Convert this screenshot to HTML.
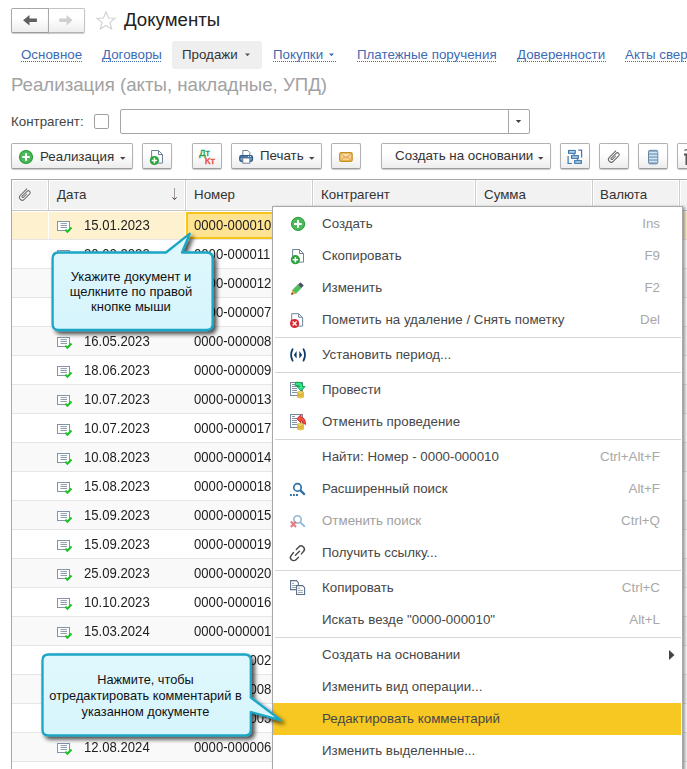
<!DOCTYPE html>
<html><head><meta charset="utf-8">
<style>
*{box-sizing:border-box;margin:0;padding:0}
html,body{width:687px;height:769px;overflow:hidden;background:#fff}
body{position:relative;font-family:"Liberation Sans",sans-serif;font-size:13.33px;color:#333}
.a{position:absolute;white-space:nowrap}
.btn{position:absolute;height:26px;border:1px solid #b2b2b2;border-bottom-color:#9c9c9c;border-radius:2px;background:linear-gradient(#fff 40%,#ededed);box-shadow:0 1px 1px rgba(0,0,0,.2)}
.lnk{position:absolute;color:#3d6bb3;white-space:nowrap;line-height:15px;height:16px;background:linear-gradient(90deg,#3d6bb3 50%,transparent 50%) 0 14px/2px 1px repeat-x}
.hd{position:absolute;top:180px;height:30px;background:#f2f2f2}
.vl{position:absolute;width:1px;background:#fff}
.row{position:absolute;left:12px;width:675px;height:29px}
.cell{position:absolute;white-space:nowrap;line-height:29px}
.mi{position:absolute;left:273px;width:409px;height:32px}
.mi .t{position:absolute;left:49px;top:0;line-height:32px;color:#474747}
.mi .k{position:absolute;right:22px;top:0;line-height:32px;color:#a8a8a8}
.dg{line-height:16px;color:#1e1e1e;transform:scale(0.985,1.09);transform-origin:0 3px}
.sep{position:absolute;left:279px;width:401px;height:1px;background:#d6d6d6}
</style></head><body>

<!-- nav buttons -->
<div class="btn" style="left:11px;top:8px;width:38px;height:25px;border-color:#a8a8a8;border-bottom-color:#9a9a9a;border-radius:2px 0 0 2px"></div>
<div class="btn" style="left:48px;top:8px;width:37px;height:25px;border-color:#c4c4c4;border-bottom-color:#b4b4b4;border-left-color:#a8a8a8;border-radius:0 2px 2px 0"></div>
<svg class="a" style="left:0;top:0" width="90" height="40" viewBox="0 0 90 40"><path d="M23.1 20.3 L29.5 15.1 V18.6 H36.9 V22 H29.5 V25.5Z" fill="#606060"/><path d="M72.6 20.3 L66.6 15.1 V18.6 H59.2 V22 H66.6 V25.5Z" fill="#cfcfcf"/></svg>
<svg class="a" style="left:96px;top:11px" width="20" height="19" viewBox="0 0 20 19"><path d="M10 1 L12.6 7 L19 7.3 L14 11.4 L15.7 18 L10 14.4 L4.3 18 L6 11.4 L1 7.3 L7.4 7Z" fill="none" stroke="#d4d4d4" stroke-width="1.2"/></svg>
<div class="a" style="left:124px;top:9px;font-size:18.67px;color:#222">Документы</div>

<!-- tabs -->
<div class="lnk" style="left:21px;top:47px;width:61px">Основное</div>
<div class="lnk" style="left:102px;top:47px;width:60px">Договоры</div>
<div class="a" style="left:172px;top:41px;width:90px;height:28px;background:#efefef;border-radius:3px"></div>
<div class="a" style="left:182px;top:47px;line-height:15px;color:#333">Продажи</div>
<svg class="a" style="left:245px;top:53px" width="6" height="4" viewBox="0 0 6 4"><path d="M0 0.5h5L2.5 3.2z" fill="#555"/></svg>
<div class="lnk" style="left:273px;top:47px;width:63px">Покупки</div>
<svg class="a" style="left:329px;top:53px" width="6" height="4" viewBox="0 0 6 4"><path d="M0 0.5h5L2.5 3.2z" fill="#3d6bb3"/></svg>
<div class="lnk" style="left:357px;top:47px;width:140px">Платежные поручения</div>
<div class="lnk" style="left:517px;top:47px;width:89px">Доверенности</div>
<div class="lnk" style="left:625px;top:47px;width:90px">Акты сверки</div>
<div class="a" style="left:11px;top:74px;font-size:18.67px;color:#a2a2a2">Реализация (акты, накладные, УПД)</div>

<!-- filter -->
<div class="a" style="left:11px;top:114px;color:#444">Контрагент:</div>
<div class="a" style="left:94px;top:114px;width:15px;height:15px;border:1px solid #a0a0a0;border-radius:2px;background:#fff"></div>
<div class="a" style="left:120px;top:109px;width:410px;height:25px;border:1px solid #a6a6a6;border-radius:2px;background:#fff"></div>
<div class="a" style="left:508px;top:110px;width:1px;height:23px;background:#a8a8a8"></div>
<svg class="a" style="left:515px;top:119px" width="7" height="5" viewBox="0 0 7 5"><path d="M0.8 1 H6.2 L3.5 3.9Z" fill="#404040"/></svg>


<!-- toolbar -->
<div class="btn" style="left:11px;top:143px;width:122px"></div>
<svg class="a" style="left:18px;top:149px" width="16" height="16" viewBox="0 0 16 16"><circle cx="8" cy="8" r="6.5" fill="#4cb95a" stroke="#239b34" stroke-width="1.1"/><path d="M8 4.3v7.4M4.3 8h7.4" stroke="#fff" stroke-width="2"/></svg>
<div class="a" style="left:40px;top:148.5px;line-height:16px;color:#333">Реализация</div>
<svg class="a" style="left:120px;top:156px" width="6" height="4" viewBox="0 0 6 4"><path d="M0 1h5.5L2.75 3.8z" fill="#444"/></svg>
<div class="btn" style="left:142px;top:143px;width:30px"></div>
<svg class="a" style="left:142px;top:143px" width="30" height="26" viewBox="0 0 30 26"><g transform="translate(3,0)"><path d="M6.6 7.5h6.9l4 4v8.6h-10.9z" fill="#fff" stroke="#6f8398" stroke-width="1"/><path d="M13.5 7.5v4h4" fill="none" stroke="#6f8398" stroke-width="1"/><circle cx="9.4" cy="17.5" r="4.6" fill="#2aa23a"/><path d="M9.4 14.8v5.4M6.7 17.5h5.4" stroke="#fff" stroke-width="1.6"/></g></svg>
<div class="btn" style="left:192px;top:143px;width:30px"></div>
<svg class="a" style="left:190px;top:141px" width="35" height="30" viewBox="0 0 35 30"><text x="9.2" y="14.9" font-family="Liberation Sans" font-size="9.4" fill="#1e9a48" stroke="#1e9a48" stroke-width="0.35" textLength="10.6" lengthAdjust="spacingAndGlyphs">Дт</text><text x="14.8" y="22.9" font-family="Liberation Sans" font-size="8.2" fill="#ea4a42" stroke="#ea4a42" stroke-width="0.35" textLength="10.2" lengthAdjust="spacingAndGlyphs">Кт</text></svg>

<div class="btn" style="left:231px;top:143px;width:91px"></div>
<svg class="a" style="left:232px;top:143px" width="30" height="26" viewBox="0 0 30 26"><path d="M10.8 7.5h5l2 2v3.5h-7z" fill="#fff" stroke="#6d7f92" stroke-width="1"/><rect x="7.8" y="12.8" width="12.6" height="5.4" rx="1.4" fill="#7ba6d0" stroke="#2c5a8a" stroke-width="1.4"/><path d="M8.5 14.3h11" stroke="#2c5a8a" stroke-width="1"/><rect x="10.8" y="15" width="7" height="5.2" fill="#fff" stroke="#6d7f92" stroke-width="1"/><rect x="16.2" y="13" width="0.9" height="0.9" fill="#fff"/><rect x="18" y="13" width="0.9" height="0.9" fill="#fff"/></svg>
<div class="a" style="left:260px;top:148px;line-height:16px;color:#333">Печать</div>
<svg class="a" style="left:309px;top:156px" width="6" height="4" viewBox="0 0 6 4"><path d="M0 1h5.5L2.75 3.8z" fill="#444"/></svg>
<div class="btn" style="left:331px;top:143px;width:30px"></div>
<svg class="a" style="left:331px;top:143px" width="30" height="26" viewBox="0 0 30 26"><defs><linearGradient id="env" x1="0" y1="0" x2="0" y2="1"><stop offset="0" stop-color="#fdf0b8"/><stop offset="0.5" stop-color="#f8c890"/><stop offset="1" stop-color="#f6dc78"/></linearGradient></defs><rect x="8.8" y="9.7" width="12.3" height="8.5" rx="1.3" fill="url(#env)" stroke="#c8901e" stroke-width="1.4"/><path d="M10 10.8 L15 15 L20 10.8M10 17.5 L13.6 13.9M20 17.5 L16.4 13.9" fill="none" stroke="#d89a48" stroke-width="0.9"/></svg>
<div class="btn" style="left:381px;top:143px;width:170px"></div>
<div class="a" style="left:395px;top:148px;line-height:16px;color:#333">Создать на основании</div>
<svg class="a" style="left:538px;top:156px" width="6" height="4" viewBox="0 0 6 4"><path d="M0 1h5.5L2.75 3.8z" fill="#444"/></svg>
<div class="btn" style="left:560px;top:143px;width:30px"></div>
<svg class="a" style="left:560px;top:143px" width="30" height="26" viewBox="0 0 30 26"><path d="M8.1 13.1V20.5H11.8M18.3 7.2H21.6V14.4" fill="none" stroke="#3a78b0" stroke-width="1.2"/><path d="M14 10.7V12.2M17.5 15.7V17.2" stroke="#3a78b0" stroke-width="1.2"/><rect x="8.6" y="7.5" width="6.6" height="2.8" fill="#c8dcee" stroke="#3a78b0" stroke-width="1.2"/><rect x="11.6" y="12.7" width="6.7" height="2.6" fill="#c8dcee" stroke="#3a78b0" stroke-width="1.2"/><rect x="14.7" y="17.7" width="6.6" height="2.6" fill="#c8dcee" stroke="#3a78b0" stroke-width="1.2"/></svg>
<div class="btn" style="left:599px;top:143px;width:30px"></div>
<svg class="a" style="left:599px;top:143px" width="30" height="26" viewBox="0 0 30 26"><path transform="translate(14.6,14.1) rotate(-45)" d="M6.3 -2.8 L-3.3 -2.8 A2.8 2.8 0 0 0 -3.3 2.8 L4.4 2.8 A1.9 1.9 0 0 0 4.4 -1.0 L-2.4 -1.0 A0.85 0.85 0 0 0 -2.4 0.7 L2.6 0.7" fill="none" stroke="#666" stroke-width="1"/></svg>
<div class="btn" style="left:638px;top:143px;width:30px"></div>
<svg class="a" style="left:638px;top:143px" width="30" height="26" viewBox="0 0 30 26"><rect x="10.5" y="7.3" width="9.3" height="13.6" rx="1.6" fill="#90b2cf" stroke="#6888a6" stroke-width="1"/><path d="M11 9.6h8.3M11 12.6h8.3M11 15.6h8.3M11 18.6h8.3" stroke="#dbe8f3" stroke-width="1"/></svg>
<div class="btn" style="left:677px;top:143px;width:30px"></div>
<svg class="a" style="left:680px;top:143px" width="10" height="26" viewBox="0 0 10 26"><path d="M4.5 7.5 L7 6.5" stroke="#777" stroke-width="1.6"/><path d="M4 11.5 H6.5 V21 H5.5" fill="none" stroke="#555" stroke-width="2"/></svg>


<!-- table -->
<div class="a" style="left:11px;top:179px;width:676px;height:590px;border-left:1px solid #a8a8a8;border-top:1px solid #a8a8a8"></div>
<div class="hd" style="left:12px;width:675px;border-top:1px solid #fff;border-bottom:1px solid #fff;border-left:1px solid #fff"></div>
<div class="a" style="left:12px;top:210px;width:675px;height:1px;background:#c4c4c4"></div>
<div class="a" style="left:47px;top:180px;width:1px;height:30px;background:#fff"></div><div class="a" style="left:48px;top:180px;width:1px;height:30px;background:#cdcdcd"></div><div class="a" style="left:49px;top:180px;width:1px;height:30px;background:#fff"></div>
<div class="a" style="left:184px;top:180px;width:1px;height:30px;background:#fff"></div><div class="a" style="left:185px;top:180px;width:1px;height:30px;background:#cdcdcd"></div><div class="a" style="left:186px;top:180px;width:1px;height:30px;background:#fff"></div>
<div class="a" style="left:311px;top:180px;width:1px;height:30px;background:#fff"></div><div class="a" style="left:312px;top:180px;width:1px;height:30px;background:#cdcdcd"></div><div class="a" style="left:313px;top:180px;width:1px;height:30px;background:#fff"></div>
<div class="a" style="left:474px;top:180px;width:1px;height:30px;background:#fff"></div><div class="a" style="left:475px;top:180px;width:1px;height:30px;background:#cdcdcd"></div><div class="a" style="left:476px;top:180px;width:1px;height:30px;background:#fff"></div>
<div class="a" style="left:591px;top:180px;width:1px;height:30px;background:#fff"></div><div class="a" style="left:592px;top:180px;width:1px;height:30px;background:#cdcdcd"></div><div class="a" style="left:593px;top:180px;width:1px;height:30px;background:#fff"></div>
<div class="a" style="left:678px;top:180px;width:1px;height:30px;background:#fff"></div><div class="a" style="left:679px;top:180px;width:1px;height:30px;background:#cdcdcd"></div><div class="a" style="left:680px;top:180px;width:1px;height:30px;background:#fff"></div>
<svg class="a" style="left:12px;top:181px" width="30" height="26" viewBox="0 0 30 26"><path transform="translate(12.6,14.1) rotate(-45)" d="M6.3 -2.8 L-3.3 -2.8 A2.8 2.8 0 0 0 -3.3 2.8 L4.4 2.8 A1.9 1.9 0 0 0 4.4 -1.0 L-2.4 -1.0 A0.85 0.85 0 0 0 -2.4 0.7 L2.6 0.7" fill="none" stroke="#707070" stroke-width="1"/></svg>
<div class="a" style="left:57px;top:187px;line-height:16px;color:#333">Дата</div>
<svg class="a" style="left:170px;top:187px" width="9" height="14" viewBox="0 0 9 14"><path d="M4.5 1V12.3" stroke="#9a9090" stroke-width="0.9"/><path d="M2.4 10.4 L4.5 12.6 L6.6 10.4" fill="none" stroke="#3a3a3a" stroke-width="1"/></svg>
<div class="a" style="left:194px;top:187px;line-height:16px;color:#333">Номер</div>
<div class="a" style="left:321px;top:187px;line-height:16px;color:#333">Контрагент</div>
<div class="a" style="left:484px;top:187px;line-height:16px;color:#333">Сумма</div>
<div class="a" style="left:600px;top:187px;line-height:16px;color:#333">Валюта</div>
<div class="a" style="left:12px;top:212px;width:675px;height:27px;background:#fdf1cf"></div><div class="a" style="left:12px;top:239px;width:675px;height:1px;background:#e6e6e6"></div><div class="a" style="left:48px;top:211px;width:1px;height:28px;background:#fff"></div><div class="a" style="left:185px;top:211px;width:1px;height:28px;background:#fff"></div><div class="a" style="left:312px;top:211px;width:1px;height:28px;background:#fff"></div><div class="a" style="left:475px;top:211px;width:1px;height:28px;background:#fff"></div><div class="a" style="left:592px;top:211px;width:1px;height:28px;background:#fff"></div><div class="a" style="left:679px;top:212px;width:1px;height:27px;background:#fff"></div><div class="a" style="left:186px;top:212px;width:126px;height:27px;border:2px solid #f6c51c;background:#fde392"></div><svg class="a" style="left:57px;top:221px" width="16" height="13" viewBox="0 0 16 13"><rect x="0.5" y="0.5" width="12" height="9" fill="#fff" stroke="#8494a6"/><path d="M3.5 2.6h6.5M3.5 4.5h6.5M3.5 6.5h6.5" stroke="#8e9cac" stroke-width="1"/><path d="M8.3 8.6l2.1 2.2 4.1-4.3" fill="none" stroke="#1fc32a" stroke-width="2.1"/></svg><div class="a dg" style="left:84px;top:217px">15.01.2023</div><div class="a dg" style="left:194px;top:217px">0000-000010</div>
<div class="a" style="left:12px;top:240px;width:675px;height:28px;background:#fff"></div><div class="a" style="left:12px;top:268px;width:675px;height:1px;background:#e6e6e6"></div><svg class="a" style="left:57px;top:250px" width="16" height="13" viewBox="0 0 16 13"><rect x="0.5" y="0.5" width="12" height="9" fill="#fff" stroke="#8494a6"/><path d="M3.5 2.6h6.5M3.5 4.5h6.5M3.5 6.5h6.5" stroke="#8e9cac" stroke-width="1"/><path d="M8.3 8.6l2.1 2.2 4.1-4.3" fill="none" stroke="#1fc32a" stroke-width="2.1"/></svg><div class="a dg" style="left:84px;top:246px">20.02.2023</div><div class="a dg" style="left:194px;top:246px">0000-000011</div>
<div class="a" style="left:12px;top:269px;width:675px;height:28px;background:#f9f9f9"></div><div class="a" style="left:12px;top:297px;width:675px;height:1px;background:#e6e6e6"></div><svg class="a" style="left:57px;top:279px" width="16" height="13" viewBox="0 0 16 13"><rect x="0.5" y="0.5" width="12" height="9" fill="#fff" stroke="#8494a6"/><path d="M3.5 2.6h6.5M3.5 4.5h6.5M3.5 6.5h6.5" stroke="#8e9cac" stroke-width="1"/><path d="M8.3 8.6l2.1 2.2 4.1-4.3" fill="none" stroke="#1fc32a" stroke-width="2.1"/></svg><div class="a dg" style="left:84px;top:275px">20.03.2023</div><div class="a dg" style="left:194px;top:275px">0000-000012</div>
<div class="a" style="left:12px;top:298px;width:675px;height:28px;background:#fff"></div><div class="a" style="left:12px;top:326px;width:675px;height:1px;background:#e6e6e6"></div><svg class="a" style="left:57px;top:308px" width="16" height="13" viewBox="0 0 16 13"><rect x="0.5" y="0.5" width="12" height="9" fill="#fff" stroke="#8494a6"/><path d="M3.5 2.6h6.5M3.5 4.5h6.5M3.5 6.5h6.5" stroke="#8e9cac" stroke-width="1"/><path d="M8.3 8.6l2.1 2.2 4.1-4.3" fill="none" stroke="#1fc32a" stroke-width="2.1"/></svg><div class="a dg" style="left:84px;top:304px">20.04.2023</div><div class="a dg" style="left:194px;top:304px">0000-000007</div>
<div class="a" style="left:12px;top:327px;width:675px;height:28px;background:#f9f9f9"></div><div class="a" style="left:12px;top:355px;width:675px;height:1px;background:#e6e6e6"></div><svg class="a" style="left:57px;top:337px" width="16" height="13" viewBox="0 0 16 13"><rect x="0.5" y="0.5" width="12" height="9" fill="#fff" stroke="#8494a6"/><path d="M3.5 2.6h6.5M3.5 4.5h6.5M3.5 6.5h6.5" stroke="#8e9cac" stroke-width="1"/><path d="M8.3 8.6l2.1 2.2 4.1-4.3" fill="none" stroke="#1fc32a" stroke-width="2.1"/></svg><div class="a dg" style="left:84px;top:333px">16.05.2023</div><div class="a dg" style="left:194px;top:333px">0000-000008</div>
<div class="a" style="left:12px;top:356px;width:675px;height:28px;background:#fff"></div><div class="a" style="left:12px;top:384px;width:675px;height:1px;background:#e6e6e6"></div><svg class="a" style="left:57px;top:366px" width="16" height="13" viewBox="0 0 16 13"><rect x="0.5" y="0.5" width="12" height="9" fill="#fff" stroke="#8494a6"/><path d="M3.5 2.6h6.5M3.5 4.5h6.5M3.5 6.5h6.5" stroke="#8e9cac" stroke-width="1"/><path d="M8.3 8.6l2.1 2.2 4.1-4.3" fill="none" stroke="#1fc32a" stroke-width="2.1"/></svg><div class="a dg" style="left:84px;top:362px">18.06.2023</div><div class="a dg" style="left:194px;top:362px">0000-000009</div>
<div class="a" style="left:12px;top:385px;width:675px;height:28px;background:#f9f9f9"></div><div class="a" style="left:12px;top:413px;width:675px;height:1px;background:#e6e6e6"></div><svg class="a" style="left:57px;top:395px" width="16" height="13" viewBox="0 0 16 13"><rect x="0.5" y="0.5" width="12" height="9" fill="#fff" stroke="#8494a6"/><path d="M3.5 2.6h6.5M3.5 4.5h6.5M3.5 6.5h6.5" stroke="#8e9cac" stroke-width="1"/><path d="M8.3 8.6l2.1 2.2 4.1-4.3" fill="none" stroke="#1fc32a" stroke-width="2.1"/></svg><div class="a dg" style="left:84px;top:391px">10.07.2023</div><div class="a dg" style="left:194px;top:391px">0000-000013</div>
<div class="a" style="left:12px;top:414px;width:675px;height:28px;background:#fff"></div><div class="a" style="left:12px;top:442px;width:675px;height:1px;background:#e6e6e6"></div><svg class="a" style="left:57px;top:424px" width="16" height="13" viewBox="0 0 16 13"><rect x="0.5" y="0.5" width="12" height="9" fill="#fff" stroke="#8494a6"/><path d="M3.5 2.6h6.5M3.5 4.5h6.5M3.5 6.5h6.5" stroke="#8e9cac" stroke-width="1"/><path d="M8.3 8.6l2.1 2.2 4.1-4.3" fill="none" stroke="#1fc32a" stroke-width="2.1"/></svg><div class="a dg" style="left:84px;top:420px">10.07.2023</div><div class="a dg" style="left:194px;top:420px">0000-000017</div>
<div class="a" style="left:12px;top:443px;width:675px;height:28px;background:#f9f9f9"></div><div class="a" style="left:12px;top:471px;width:675px;height:1px;background:#e6e6e6"></div><svg class="a" style="left:57px;top:453px" width="16" height="13" viewBox="0 0 16 13"><rect x="0.5" y="0.5" width="12" height="9" fill="#fff" stroke="#8494a6"/><path d="M3.5 2.6h6.5M3.5 4.5h6.5M3.5 6.5h6.5" stroke="#8e9cac" stroke-width="1"/><path d="M8.3 8.6l2.1 2.2 4.1-4.3" fill="none" stroke="#1fc32a" stroke-width="2.1"/></svg><div class="a dg" style="left:84px;top:449px">10.08.2023</div><div class="a dg" style="left:194px;top:449px">0000-000014</div>
<div class="a" style="left:12px;top:472px;width:675px;height:28px;background:#fff"></div><div class="a" style="left:12px;top:500px;width:675px;height:1px;background:#e6e6e6"></div><svg class="a" style="left:57px;top:482px" width="16" height="13" viewBox="0 0 16 13"><rect x="0.5" y="0.5" width="12" height="9" fill="#fff" stroke="#8494a6"/><path d="M3.5 2.6h6.5M3.5 4.5h6.5M3.5 6.5h6.5" stroke="#8e9cac" stroke-width="1"/><path d="M8.3 8.6l2.1 2.2 4.1-4.3" fill="none" stroke="#1fc32a" stroke-width="2.1"/></svg><div class="a dg" style="left:84px;top:478px">15.08.2023</div><div class="a dg" style="left:194px;top:478px">0000-000018</div>
<div class="a" style="left:12px;top:501px;width:675px;height:28px;background:#f9f9f9"></div><div class="a" style="left:12px;top:529px;width:675px;height:1px;background:#e6e6e6"></div><svg class="a" style="left:57px;top:511px" width="16" height="13" viewBox="0 0 16 13"><rect x="0.5" y="0.5" width="12" height="9" fill="#fff" stroke="#8494a6"/><path d="M3.5 2.6h6.5M3.5 4.5h6.5M3.5 6.5h6.5" stroke="#8e9cac" stroke-width="1"/><path d="M8.3 8.6l2.1 2.2 4.1-4.3" fill="none" stroke="#1fc32a" stroke-width="2.1"/></svg><div class="a dg" style="left:84px;top:507px">15.09.2023</div><div class="a dg" style="left:194px;top:507px">0000-000015</div>
<div class="a" style="left:12px;top:530px;width:675px;height:28px;background:#fff"></div><div class="a" style="left:12px;top:558px;width:675px;height:1px;background:#e6e6e6"></div><svg class="a" style="left:57px;top:540px" width="16" height="13" viewBox="0 0 16 13"><rect x="0.5" y="0.5" width="12" height="9" fill="#fff" stroke="#8494a6"/><path d="M3.5 2.6h6.5M3.5 4.5h6.5M3.5 6.5h6.5" stroke="#8e9cac" stroke-width="1"/><path d="M8.3 8.6l2.1 2.2 4.1-4.3" fill="none" stroke="#1fc32a" stroke-width="2.1"/></svg><div class="a dg" style="left:84px;top:536px">15.09.2023</div><div class="a dg" style="left:194px;top:536px">0000-000019</div>
<div class="a" style="left:12px;top:559px;width:675px;height:28px;background:#f9f9f9"></div><div class="a" style="left:12px;top:587px;width:675px;height:1px;background:#e6e6e6"></div><svg class="a" style="left:57px;top:569px" width="16" height="13" viewBox="0 0 16 13"><rect x="0.5" y="0.5" width="12" height="9" fill="#fff" stroke="#8494a6"/><path d="M3.5 2.6h6.5M3.5 4.5h6.5M3.5 6.5h6.5" stroke="#8e9cac" stroke-width="1"/><path d="M8.3 8.6l2.1 2.2 4.1-4.3" fill="none" stroke="#1fc32a" stroke-width="2.1"/></svg><div class="a dg" style="left:84px;top:565px">25.09.2023</div><div class="a dg" style="left:194px;top:565px">0000-000020</div>
<div class="a" style="left:12px;top:588px;width:675px;height:28px;background:#fff"></div><div class="a" style="left:12px;top:616px;width:675px;height:1px;background:#e6e6e6"></div><svg class="a" style="left:57px;top:598px" width="16" height="13" viewBox="0 0 16 13"><rect x="0.5" y="0.5" width="12" height="9" fill="#fff" stroke="#8494a6"/><path d="M3.5 2.6h6.5M3.5 4.5h6.5M3.5 6.5h6.5" stroke="#8e9cac" stroke-width="1"/><path d="M8.3 8.6l2.1 2.2 4.1-4.3" fill="none" stroke="#1fc32a" stroke-width="2.1"/></svg><div class="a dg" style="left:84px;top:594px">10.10.2023</div><div class="a dg" style="left:194px;top:594px">0000-000016</div>
<div class="a" style="left:12px;top:617px;width:675px;height:28px;background:#f9f9f9"></div><div class="a" style="left:12px;top:645px;width:675px;height:1px;background:#e6e6e6"></div><svg class="a" style="left:57px;top:627px" width="16" height="13" viewBox="0 0 16 13"><rect x="0.5" y="0.5" width="12" height="9" fill="#fff" stroke="#8494a6"/><path d="M3.5 2.6h6.5M3.5 4.5h6.5M3.5 6.5h6.5" stroke="#8e9cac" stroke-width="1"/><path d="M8.3 8.6l2.1 2.2 4.1-4.3" fill="none" stroke="#1fc32a" stroke-width="2.1"/></svg><div class="a dg" style="left:84px;top:623px">15.03.2024</div><div class="a dg" style="left:194px;top:623px">0000-000001</div>
<div class="a" style="left:12px;top:646px;width:675px;height:28px;background:#fff"></div><div class="a" style="left:12px;top:674px;width:675px;height:1px;background:#e6e6e6"></div><svg class="a" style="left:57px;top:656px" width="16" height="13" viewBox="0 0 16 13"><rect x="0.5" y="0.5" width="12" height="9" fill="#fff" stroke="#8494a6"/><path d="M3.5 2.6h6.5M3.5 4.5h6.5M3.5 6.5h6.5" stroke="#8e9cac" stroke-width="1"/><path d="M8.3 8.6l2.1 2.2 4.1-4.3" fill="none" stroke="#1fc32a" stroke-width="2.1"/></svg><div class="a dg" style="left:84px;top:652px">15.04.2024</div><div class="a dg" style="left:194px;top:652px">0000-000002</div>
<div class="a" style="left:12px;top:675px;width:675px;height:28px;background:#f9f9f9"></div><div class="a" style="left:12px;top:703px;width:675px;height:1px;background:#e6e6e6"></div><svg class="a" style="left:57px;top:685px" width="16" height="13" viewBox="0 0 16 13"><rect x="0.5" y="0.5" width="12" height="9" fill="#fff" stroke="#8494a6"/><path d="M3.5 2.6h6.5M3.5 4.5h6.5M3.5 6.5h6.5" stroke="#8e9cac" stroke-width="1"/><path d="M8.3 8.6l2.1 2.2 4.1-4.3" fill="none" stroke="#1fc32a" stroke-width="2.1"/></svg><div class="a dg" style="left:84px;top:681px">15.05.2024</div><div class="a dg" style="left:194px;top:681px">0000-000008</div>
<div class="a" style="left:12px;top:704px;width:675px;height:28px;background:#fff"></div><div class="a" style="left:12px;top:732px;width:675px;height:1px;background:#e6e6e6"></div><svg class="a" style="left:57px;top:714px" width="16" height="13" viewBox="0 0 16 13"><rect x="0.5" y="0.5" width="12" height="9" fill="#fff" stroke="#8494a6"/><path d="M3.5 2.6h6.5M3.5 4.5h6.5M3.5 6.5h6.5" stroke="#8e9cac" stroke-width="1"/><path d="M8.3 8.6l2.1 2.2 4.1-4.3" fill="none" stroke="#1fc32a" stroke-width="2.1"/></svg><div class="a dg" style="left:84px;top:710px">15.06.2024</div><div class="a dg" style="left:194px;top:710px">0000-000005</div>
<div class="a" style="left:12px;top:733px;width:675px;height:28px;background:#f9f9f9"></div><div class="a" style="left:12px;top:761px;width:675px;height:1px;background:#e6e6e6"></div><svg class="a" style="left:57px;top:743px" width="16" height="13" viewBox="0 0 16 13"><rect x="0.5" y="0.5" width="12" height="9" fill="#fff" stroke="#8494a6"/><path d="M3.5 2.6h6.5M3.5 4.5h6.5M3.5 6.5h6.5" stroke="#8e9cac" stroke-width="1"/><path d="M8.3 8.6l2.1 2.2 4.1-4.3" fill="none" stroke="#1fc32a" stroke-width="2.1"/></svg><div class="a dg" style="left:84px;top:739px">12.08.2024</div><div class="a dg" style="left:194px;top:739px">0000-000006</div>
<div class="a" style="left:12px;top:762px;width:675px;height:28px;background:#fff"></div><div class="a" style="left:12px;top:790px;width:675px;height:1px;background:#e6e6e6"></div><svg class="a" style="left:57px;top:772px" width="16" height="13" viewBox="0 0 16 13"><rect x="0.5" y="0.5" width="12" height="9" fill="#fff" stroke="#8494a6"/><path d="M3.5 2.6h6.5M3.5 4.5h6.5M3.5 6.5h6.5" stroke="#8e9cac" stroke-width="1"/><path d="M8.3 8.6l2.1 2.2 4.1-4.3" fill="none" stroke="#1fc32a" stroke-width="2.1"/></svg><div class="a dg" style="left:84px;top:768px">15.09.2024</div><div class="a dg" style="left:194px;top:768px">0000-000003</div>


<!-- context menu -->
<div class="a" style="left:272px;top:206px;width:411px;height:570px;border:1px solid #a8a8a8;background:#fff;box-shadow:2px 1px 3px rgba(0,0,0,.4)"></div>
<svg class="a" style="left:286px;top:210px" width="24" height="24" viewBox="0 0 24 24"><circle cx="12.1" cy="13.9" r="6.6" fill="#4cb95a" stroke="#239b34" stroke-width="1"/><path d="M12 10.1v7.7M8.1 13.9h7.7" stroke="#fff" stroke-width="2"/></svg><div class="a" style="left:322px;top:208px;line-height:32px;color:#474747">Создать</div><div class="a" style="right:27px;top:208px;line-height:32px;color:#a8a8a8">Ins</div>
<svg class="a" style="left:286px;top:242px" width="24" height="24" viewBox="0 0 24 24"><path d="M6.6 7.5h6.9l4 4v8.6h-10.9z" fill="#fff" stroke="#6f8398" stroke-width="1"/><path d="M13.5 7.5v4h4" fill="none" stroke="#6f8398" stroke-width="1"/><circle cx="9.4" cy="17.7" r="4.6" fill="#2aa23a"/><path d="M9.4 15v5.4M6.7 17.7h5.4" stroke="#fff" stroke-width="1.6"/></svg><div class="a" style="left:322px;top:240px;line-height:32px;color:#474747">Скопировать</div><div class="a" style="right:27px;top:240px;line-height:32px;color:#a8a8a8">F9</div>
<svg class="a" style="left:286px;top:274px" width="24" height="24" viewBox="0 0 24 24"><path d="M5.5 20.5 L6.63 15.97 L10.03 19.37Z" fill="#f5b050" stroke="#c88a30" stroke-width="0.5"/><path d="M5.3 20.7 L5.9 18.6 L7.4 20.1Z" fill="#3a2a20"/><path d="M6.63 15.97 L11.93 10.67 L15.33 14.07 L10.03 19.37Z" fill="#4cc05c" stroke="#34a044" stroke-width="0.5"/><path d="M11.93 10.67 L14.4 8.2 L17.8 11.6 L15.33 14.07Z" fill="#4a5665"/></svg><div class="a" style="left:322px;top:272px;line-height:32px;color:#474747">Изменить</div><div class="a" style="right:27px;top:272px;line-height:32px;color:#a8a8a8">F2</div>
<svg class="a" style="left:286px;top:306px" width="24" height="24" viewBox="0 0 24 24"><path d="M5.7 7.7h6.9l4 4v8.4h-10.9z" fill="#fff" stroke="#6f8398" stroke-width="1"/><path d="M12.6 7.7v3.5h4" fill="none" stroke="#6f8398" stroke-width="1"/><circle cx="8.6" cy="17.5" r="4.6" fill="#d62630"/><path d="M6.6 15.5l4 4M10.6 15.5l-4 4" stroke="#fff" stroke-width="1.3"/></svg><div class="a" style="left:322px;top:304px;line-height:32px;color:#474747">Пометить на удаление / Снять пометку</div><div class="a" style="right:27px;top:304px;line-height:32px;color:#a8a8a8">Del</div>
<div class="sep" style="top:337px;left:275px;width:406px"></div>
<svg class="a" style="left:286px;top:341px" width="24" height="24" viewBox="0 0 24 24"><path d="M6.6 8.2 Q3.6 13.9 6.6 19.6M17.5 8.2 Q20.5 13.9 17.5 19.6" fill="none" stroke="#0e3d6b" stroke-width="1.8" stroke-linecap="round"/><path d="M10.6 10.1 L7.8 13.9 L10.6 17.6Z M13.3 10.1 L16.2 13.9 L13.3 17.6Z" fill="#0e3d6b"/></svg><div class="a" style="left:322px;top:339px;line-height:32px;color:#474747">Установить период...</div>
<div class="sep" style="top:372px;left:275px;width:406px"></div>
<svg class="a" style="left:286px;top:378px" width="24" height="24" viewBox="0 0 24 24"><rect x="4.5" y="4.5" width="12" height="13" fill="#fff" stroke="#7589a0"/><path d="M6 6.5h3M6 8.5h5M6 10.5h5M6 12.5h5M6 14.5h5" stroke="#7f93aa" stroke-width="1"/><path d="M11.5 14 Q14.5 12.6 17.5 14 V19.2 Q14.5 20.8 11.5 19.2Z" fill="#f2d65a" stroke="#d9a93a" stroke-width="0.7"/><path d="M11.8 15.8 Q14.5 17 17.2 15.8M11.8 17.6 Q14.5 18.8 17.2 17.6" fill="none" stroke="#c99a20" stroke-width="0.9"/><path d="M9.3 4.3 H13.5 Q16.6 4.3 16.6 7.5 V8.5 H19 L15 13 L11 8.5 H13.4 V8.2 Q13.4 7.6 12.8 7.6 H9.3 Z" fill="#2fe68c" stroke="#12993f" stroke-width="0.9"/></svg><div class="a" style="left:322px;top:374px;line-height:32px;color:#474747">Провести</div>
<svg class="a" style="left:286px;top:410px" width="24" height="24" viewBox="0 0 24 24"><rect x="4.5" y="4.5" width="12" height="13" fill="#fff" stroke="#7589a0"/><path d="M6 6.5h3M6 8.5h5M6 10.5h5M6 12.5h5M6 14.5h5" stroke="#7f93aa" stroke-width="1"/><path d="M11.5 14 Q14.5 12.6 17.5 14 V19.2 Q14.5 20.8 11.5 19.2Z" fill="#f2d65a" stroke="#d9a93a" stroke-width="0.7"/><path d="M11.8 15.8 Q14.5 17 17.2 15.8M11.8 17.6 Q14.5 18.8 17.2 17.6" fill="none" stroke="#c99a20" stroke-width="0.9"/><path d="M10.8 8.8 L15 4.6 V7.2 Q19.6 7.6 19.6 14.4 L17.2 13.2 Q17 10.4 15 10.4 V13 Z" fill="#f25040" stroke="#c8201e" stroke-width="0.8"/></svg><div class="a" style="left:322px;top:406px;line-height:32px;color:#474747">Отменить проведение</div>
<div class="sep" style="top:439px;left:275px;width:406px"></div>
<div class="a" style="left:322px;top:441px;line-height:32px;color:#474747">Найти: Номер - 0000-000010</div><div class="a" style="right:27px;top:441px;line-height:32px;color:#a8a8a8">Ctrl+Alt+F</div>
<svg class="a" style="left:286px;top:475px" width="24" height="24" viewBox="0 0 24 24"><circle cx="11.5" cy="12.4" r="3.7" fill="none" stroke="#2d6fa3" stroke-width="1.7"/><path d="M14.6 15.6 L18.2 19.1" stroke="#2d6fa3" stroke-width="2.2" stroke-linecap="round"/><path d="M4 19h1.8v2h-1.8zM7 19h1.8v2h-1.8zM10 19h1.9v2h-1.9z" fill="#2d6fa3"/></svg><div class="a" style="left:322px;top:473px;line-height:32px;color:#474747">Расширенный поиск</div><div class="a" style="right:27px;top:473px;line-height:32px;color:#a8a8a8">Alt+F</div>
<svg class="a" style="left:286px;top:507px" width="24" height="24" viewBox="0 0 24 24"><circle cx="11.5" cy="12.4" r="3.7" fill="none" stroke="#92b6d6" stroke-width="1.6"/><path d="M14.6 15.6 L18.2 19.1" stroke="#92b6d6" stroke-width="2" stroke-linecap="round"/><path d="M4.8 14.5l5.2 5.5M10 14.5l-5.2 5.5" stroke="#e27a84" stroke-width="2"/></svg><div class="a" style="left:322px;top:505px;line-height:32px;color:#a0a0a0">Отменить поиск</div><div class="a" style="right:27px;top:505px;line-height:32px;color:#a8a8a8">Ctrl+Q</div>
<svg class="a" style="left:286px;top:539px" width="24" height="24" viewBox="0 0 24 24"><path d="M10.3 10.5 L12.8 8 A3.2 3.2 0 0 1 17.4 12.5 L15.4 14.9" fill="none" stroke="#4a4a4a" stroke-width="1.4" stroke-linecap="round"/><path d="M12.5 18.2 L10 20.7 A3.2 3.2 0 0 1 5.4 16.2 L7.5 13.5" fill="none" stroke="#4a4a4a" stroke-width="1.4" stroke-linecap="round"/><path d="M9.4 16.3 L13.5 12.3" stroke="#4a4a4a" stroke-width="1.4" stroke-linecap="round"/></svg><div class="a" style="left:322px;top:537px;line-height:32px;color:#474747">Получить ссылку...</div>
<div class="sep" style="top:570px;left:275px;width:406px"></div>
<svg class="a" style="left:286px;top:574px" width="24" height="24" viewBox="0 0 24 24"><path d="M4.6 6.6h5.9l1.9 2v7h-7.8z" fill="#fff" stroke="#5a7088" stroke-width="1.1"/><path d="M6.1 9.4h2M6.1 11.5h4.5M6.1 13.5h4.5" stroke="#8a98a6" stroke-width="0.9"/><path d="M10.6 11.6h6.1l1.9 2v6.9h-8z" fill="#fff" stroke="#5a7088" stroke-width="1.1"/><path d="M12.1 14.3h2M12.1 16.4h4.8M12.1 18.4h4.8" stroke="#8a98a6" stroke-width="0.9"/></svg><div class="a" style="left:322px;top:572px;line-height:32px;color:#474747">Копировать</div><div class="a" style="right:27px;top:572px;line-height:32px;color:#a8a8a8">Ctrl+C</div>
<div class="a" style="left:322px;top:604px;line-height:32px;color:#474747">Искать везде "0000-000010"</div><div class="a" style="right:27px;top:604px;line-height:32px;color:#a8a8a8">Alt+L</div>
<div class="sep" style="top:637px;left:275px;width:406px"></div>
<svg class="a" style="left:669px;top:650px" width="6" height="10" viewBox="0 0 6 10"><path d="M0 0 L5.5 5 L0 10Z" fill="#444"/></svg><div class="a" style="left:322px;top:639px;line-height:32px;color:#474747">Создать на основании</div>
<div class="a" style="left:322px;top:671px;line-height:32px;color:#474747">Изменить вид операции...</div>
<div class="a" style="left:273px;top:703px;width:408px;height:32px;background:#f8c822"></div><div class="a" style="left:322px;top:703px;line-height:32px;color:#474747">Редактировать комментарий</div>
<div class="a" style="left:322px;top:735px;line-height:32px;color:#474747">Изменить выделенные...</div>

<!-- callouts -->
<svg class="a" style="left:0;top:0" width="687" height="769" viewBox="0 0 687 769">
<defs>
<linearGradient id="cg" x1="0" y1="0" x2="0" y2="1"><stop offset="0" stop-color="#e0f8fd"/><stop offset="1" stop-color="#d6f5fc"/></linearGradient>
<filter id="sh" x="-20%" y="-20%" width="140%" height="140%"><feGaussianBlur in="SourceAlpha" stdDeviation="2"/><feOffset dx="3" dy="3"/><feComponentTransfer><feFuncA type="linear" slope="0.7"/></feComponentTransfer><feMerge><feMergeNode/><feMergeNode in="SourceGraphic"/></feMerge></filter>
</defs>
<path filter="url(#sh)" d="M58.6 252.5 H166 L189.8 233.6 L182 252.5 H206.6 Q212.6 252.5 212.6 258.5 V324 Q212.6 330 206.6 330 H58.6 Q52.6 330 52.6 324 V258.5 Q52.6 252.5 58.6 252.5 Z" fill="url(#cg)" stroke="#1aa6c6" stroke-width="2.3" stroke-linejoin="round"/>
<path filter="url(#sh)" d="M48.5 654.5 H244.8 Q250.8 654.5 250.8 660.5 V697.5 L280.6 720.2 L250.8 712 V729.4 Q250.8 735.4 244.8 735.4 H48.5 Q42.5 735.4 42.5 729.4 V660.5 Q42.5 654.5 48.5 654.5 Z" fill="url(#cg)" stroke="#1aa6c6" stroke-width="2.3" stroke-linejoin="round"/>
</svg>
<div class="a" style="left:51px;top:268.5px;width:160px;text-align:center;font-size:13px;line-height:15.1px;color:#111;white-space:normal">Укажите документ и<br>щелкните по правой<br>кнопке мыши</div>
<div class="a" style="left:42px;top:672px;width:207px;text-align:center;font-size:12.75px;line-height:16px;color:#111;white-space:normal">Нажмите, чтобы<br>отредактировать комментарий в<br>указанном документе</div>

</body></html>
